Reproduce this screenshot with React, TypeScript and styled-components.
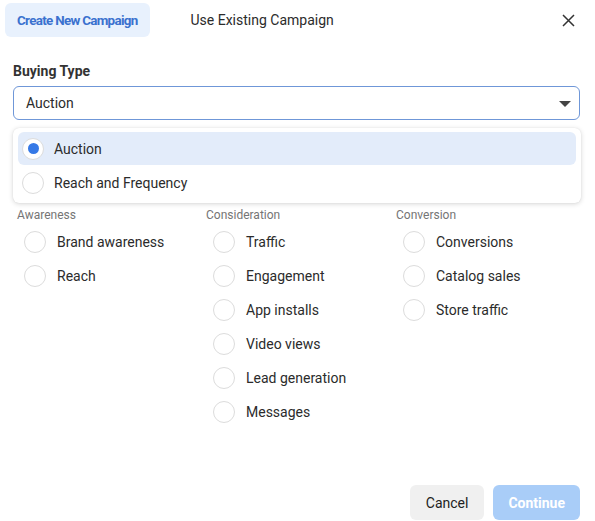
import { FC } from 'react';
import styled, { createGlobalStyle } from 'styled-components';

const GlobalStyle = createGlobalStyle`
  html, body {
    margin: 0;
    padding: 0;
    background: #fff;
  }
  body {
    font-family: Roboto, "Liberation Sans", Arial, sans-serif;
    color: #333;
    -webkit-font-smoothing: antialiased;
  }
`;

const Dialog = styled.div`
  width: 595px;
  height: 521px;
  display: flex;
  flex-direction: column;
  box-sizing: border-box;
`;

const Header = styled.header`
  display: flex;
  align-items: center;
  padding: 3px 20px 0 5px;
  height: 34px;
`;

const Tabs = styled.nav`
  display: flex;
  gap: 29px;
  flex: 1;
`;

const Tab = styled.div<{ $active?: boolean }>`
  height: 34px;
  display: flex;
  align-items: center;
  padding: 0 12px;
  border-radius: 6px;
  font-size: ${({ $active }) => ($active ? '13.4px' : '14px')};
  letter-spacing: ${({ $active }) => ($active ? '-0.7px' : '0')};
  font-weight: ${({ $active }) => ($active ? 700 : 400)};
  color: ${({ $active }) => ($active ? '#3a71cf' : '#2b2b2b')};
  background: ${({ $active }) => ($active ? '#e8f1fd' : 'transparent')};
  cursor: pointer;
`;

const CloseButton = styled.button`
  width: 14px;
  height: 14px;
  border: 0;
  padding: 0;
  background: none;
  display: flex;
  align-items: center;
  justify-content: center;
  color: #333;
  cursor: pointer;
`;

const Body = styled.main`
  padding: 0 15px 0 13px;
`;

const FieldLabel = styled.div`
  margin-top: 25px;
  font-size: 14px;
  font-weight: 700;
  color: #333;
  line-height: 18px;
`;

const SelectBox = styled.div`
  position: relative;
  margin-top: 6px;
`;

const SelectControl = styled.div`
  height: 34px;
  box-sizing: border-box;
  border: 1px solid #6f97d8;
  border-radius: 6px;
  display: flex;
  align-items: center;
  justify-content: space-between;
  padding: 0 8px 0 12px;
  font-size: 14px;
  color: #2b2b2b;
`;

const Caret = styled.span`
  width: 0;
  height: 0;
  border-left: 6px solid transparent;
  border-right: 6px solid transparent;
  border-top: 6px solid #444;
  margin-top: 1px;
`;

const Menu = styled.div`
  position: absolute;
  top: 42px;
  left: 0;
  right: -1px;
  z-index: 5;
  background: #fff;
  border-radius: 6px;
  box-shadow: 0 1px 5px rgba(0, 0, 0, 0.16), 0 0 1px rgba(0, 0, 0, 0.12);
  padding: 4px 5px;
`;

const MenuItem = styled.div<{ $selected?: boolean }>`
  height: 33px;
  display: flex;
  align-items: center;
  gap: 10px;
  padding: 0 4px;
  border-radius: 6px;
  font-size: 14px;
  color: #2b2b2b;
  background: ${({ $selected }) => ($selected ? '#e3ecfa' : 'transparent')};
  &:last-child {
    padding-top: 1px;
  }
`;

const Radio = styled.span<{ $checked?: boolean }>`
  width: 22px;
  height: 22px;
  box-sizing: border-box;
  border-radius: 50%;
  border: 1px solid #dcdcdc;
  background: #fff;
  display: flex;
  align-items: center;
  justify-content: center;
  flex-shrink: 0;
  &::after {
    content: '';
    width: 11px;
    height: 11px;
    border-radius: 50%;
    background: ${({ $checked }) => ($checked ? '#3679e6' : 'transparent')};
  }
`;

const ObjectiveGrid = styled.div`
  display: grid;
  grid-template-columns: 189px 190px 1fr;
  padding-left: 4px;
  margin-top: 86px;
`;

const Column = styled.div`
  display: flex;
  flex-direction: column;
`;

const ColumnTitle = styled.div`
  font-size: 12px;
  color: #757575;
  line-height: 14px;
  margin: 2px 0 3px;
`;

const Option = styled.label`
  height: 34px;
  display: flex;
  align-items: center;
  gap: 11px;
  padding-left: 7px;
  font-size: 14px;
  color: #2b2b2b;
  cursor: pointer;
`;

const Footer = styled.footer`
  margin-top: auto;
  display: flex;
  justify-content: flex-end;
  gap: 9px;
  padding: 0 15px 1px 0;
`;

const Button = styled.button<{ $primary?: boolean }>`
  height: 35px;
  border: 0;
  border-radius: 6px;
  font-family: inherit;
  font-size: 14px;
  padding: 0 ${({ $primary }) => ($primary ? '15px' : '16px')};
  font-weight: ${({ $primary }) => ($primary ? 700 : 400)};
  color: ${({ $primary }) => ($primary ? '#fff' : '#222')};
  background: ${({ $primary }) => ($primary ? '#a9cdf8' : '#f0f0f0')};
  cursor: pointer;
`;

const objectives = [
  { title: 'Awareness', items: ['Brand awareness', 'Reach'] },
  {
    title: 'Consideration',
    items: ['Traffic', 'Engagement', 'App installs', 'Video views', 'Lead generation', 'Messages'],
  },
  { title: 'Conversion', items: ['Conversions', 'Catalog sales', 'Store traffic'] },
];

const buyingTypes = ['Auction', 'Reach and Frequency'];

const App: FC = () => {
  const selected = 'Auction';
  return (
    <>
      <GlobalStyle />
      <Dialog>
        <Header>
          <Tabs>
            <Tab $active>Create New Campaign</Tab>
            <Tab>Use Existing Campaign</Tab>
          </Tabs>
          <CloseButton aria-label="Close">
            <svg width="13" height="13" viewBox="0 0 13 13" fill="none" stroke="currentColor" strokeWidth="1.5">
              <path d="M1 1L12 12M12 1L1 12" />
            </svg>
          </CloseButton>
        </Header>
        <Body>
          <FieldLabel>Buying Type</FieldLabel>
          <SelectBox>
            <SelectControl>
              <span>{selected}</span>
              <Caret />
            </SelectControl>
            <Menu>
              {buyingTypes.map((t) => (
                <MenuItem key={t} $selected={t === selected}>
                  <Radio $checked={t === selected} />
                  {t}
                </MenuItem>
              ))}
            </Menu>
          </SelectBox>
          <ObjectiveGrid>
            {objectives.map((col) => (
              <Column key={col.title}>
                <ColumnTitle>{col.title}</ColumnTitle>
                {col.items.map((item) => (
                  <Option key={item}>
                    <Radio />
                    {item}
                  </Option>
                ))}
              </Column>
            ))}
          </ObjectiveGrid>
        </Body>
        <Footer>
          <Button>Cancel</Button>
          <Button $primary>Continue</Button>
        </Footer>
      </Dialog>
    </>
  );
};

export default App;
